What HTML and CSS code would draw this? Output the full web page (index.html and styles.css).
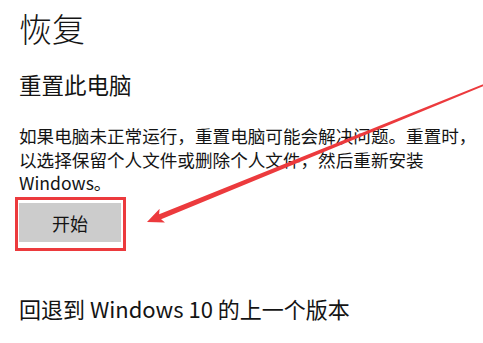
FILE: index.html
```html
<!DOCTYPE html>
<html lang="zh-CN">
<head>
<meta charset="utf-8">
<title>恢复</title>
<link rel="stylesheet" href="styles.css">
</head>
<body>
<main class="page">
  <h1 class="title">恢复</h1>
  <h2 class="section">重置此电脑</h2>
  <p class="desc">如果电脑未正常运行，重置电脑可能会解决问题。重置时，<br>以选择保留个人文件或删除个人文件，然后重新安装<br>Windows。</p>
  <div class="mark">
    <button class="btn" type="button">开始</button>
  </div>
  <h2 class="section back">回退到 Windows 10 的上一个版本</h2>
</main>
<svg class="arrow" width="483" height="343" viewBox="0 0 483 343" aria-hidden="true">
  <polygon fill="#ec3a3d" points="147,222 159.6,208.8 159.1,214.2 489.7,81.6 490.3,83.2 161.1,219.3 165,222.6"/>
</svg>
</body>
</html>
```
FILE: styles.css
```css
html, body {
  margin: 0;
  padding: 0;
  background: #ffffff;
  overflow: hidden;
  width: 483px;
  height: 343px;
}
body {
  position: relative;
  font-family: "Noto Sans CJK SC", "Noto Sans", sans-serif;
  color: #141414;
}
.page {
  padding: 0 0 0 19px;
}
.title {
  margin: 0;
  padding-top: 6px;
  font-size: 33px;
  line-height: 44px;
  font-weight: 300;
}
.section {
  margin: 19px 0 0;
  font-size: 22.5px;
  line-height: 30px;
  font-weight: 400;
}
.desc {
  margin: 25px 0 0;
  font-size: 17.6px;
  line-height: 23.5px;
  white-space: nowrap;
}
.mark {
  display: inline-block;
  margin: 2.5px 0 0 -4px;
  border: 3px solid #ec3a3d;
  padding: 3px 2px 6px 1px;
}
.btn {
  display: block;
  width: 102px;
  height: 39px;
  border: 0;
  background: #cccccc;
  color: #141414;
  font-family: "Noto Sans CJK SC", sans-serif;
  font-size: 18px;
  padding: 0;
}
.back {
  margin-top: 42px;
  font-size: 22px;
}
.arrow {
  position: absolute;
  left: 0;
  top: 0;
}
```
